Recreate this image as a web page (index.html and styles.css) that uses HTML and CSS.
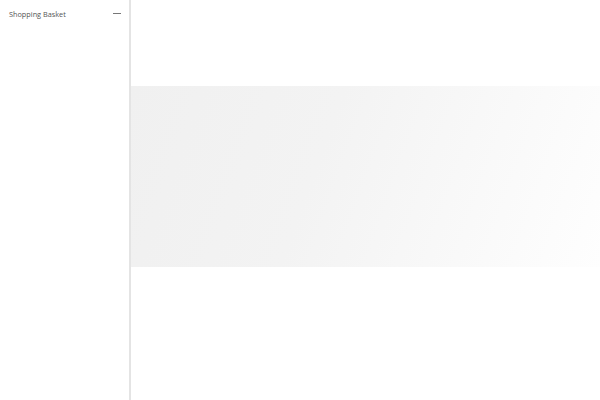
FILE: index.html
```html
<!DOCTYPE html>
<html lang="en">
<head>
    <meta charset="UTF-8">
    <meta name="viewport" content="width=device-width, initial-scale=1.0">
    <title>Shopping Basket</title>
    <link rel="stylesheet" href="styles.css">
</head>
<body>
    <div class="layout">
        <aside class="basket">
            <div class="basket-header">
                <span class="basket-title">Shopping Basket</span>
                <span class="basket-toggle"></span>
            </div>
        </aside>
        <main class="stage">
            <div class="banner"></div>
        </main>
    </div>
</body>
</html>
```

FILE: styles.css
```css
body {
    margin: 0;
    font-family: "Open Sans", Arial, sans-serif;
    background-color: #fff;
}
.layout {
    display: flex;
    height: 400px;
}
.basket {
    width: 129px;
    border-right: 2px solid #e4e4e4;
    box-sizing: content-box;
}
.basket-header {
    display: flex;
    align-items: center;
    justify-content: space-between;
    padding: 7px 8px 0 9px;
    height: 13px;
}
.basket-title {
    font-size: 7.3px;
    color: #555;
}
.basket-toggle {
    width: 8px;
    height: 1px;
    background-color: #777;
}
.stage {
    flex: 1;
    padding-top: 86px;
}
.banner {
    height: 181px;
    background: linear-gradient(110deg, #f0f0f0 0%, #f3f3f3 40%, #fefefe 100%);
}
```
